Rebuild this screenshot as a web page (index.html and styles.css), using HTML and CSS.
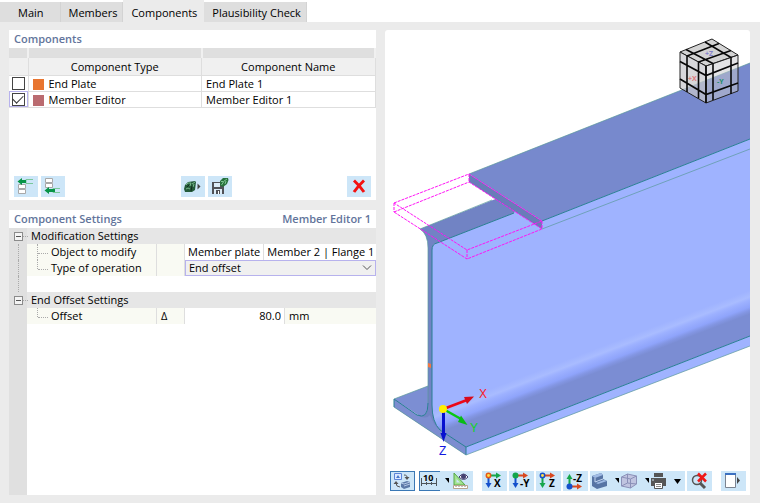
FILE: index.html
```html
<!DOCTYPE html>
<html lang="en">
<head>
<meta charset="utf-8">
<title>Steel Joint – Components</title>
<link rel="stylesheet" href="styles.css">
</head>
<body>
<nav class="tabs" role="tablist">
  <button class="tab" role="tab">Main</button>
  <button class="tab" role="tab">Members</button>
  <button class="tab active" role="tab" aria-selected="true">Components</button>
  <button class="tab" role="tab">Plausibility Check</button>
</nav>
<main class="workspace">
  <div class="side">
    <section class="panel components">
      <h2>Components</h2>
      <table class="list">
        <colgroup><col class="c-check"><col><col></colgroup>
        <thead>
          <tr class="strip"><td></td><td></td><td></td></tr>
          <tr><th></th><th scope="col">Component Type</th><th scope="col">Component Name</th></tr>
        </thead>
        <tbody>
          <tr><td class="check"><input type="checkbox" aria-label="End Plate"></td><td><i class="swatch orange"></i>End Plate</td><td>End Plate 1</td></tr>
          <tr><td class="check focus"><input type="checkbox" checked aria-label="Member Editor"></td><td><i class="swatch rose"></i>Member Editor</td><td>Member Editor 1</td></tr>
        </tbody>
      </table>
      <div class="actions">
        <button aria-label="Insert before"><svg viewBox="0 0 24 21"><g fill="#fff" stroke="#a8a8a8"><path d="M4.500 8.500h7v4h-7zM4.500 13.500h7v4h-7z"/></g><path d="M19 3.500h-7v4h7" fill="none" stroke="#7ac79b"/><path d="M3.500 5.500L8 2v2h4v3H8v2z" fill="#079447"/></svg></button>
        <button aria-label="Insert after"><svg viewBox="0 0 24 21"><g fill="#fff" stroke="#a8a8a8"><path d="M4.500 2.500h7v4h-7zM4.500 7.500h7v4h-7z"/></g><path d="M19 12.500h-7v4h7" fill="none" stroke="#7ac79b"/><path d="M3.500 14.500L8 11v2h6v3H8v2z" fill="#079447"/></svg></button>
        <button class="library" aria-label="Load component"><svg viewBox="0 0 24 21"><path d="M4 9l3-3 7-1 1 1-1 8-3 2-7 0-1-3z" fill="#245b3a"/><path d="M5 9l2-2h3l-1 3M5 13l2-1 2 1M11 8l3-2M12 11l1-3" stroke="#79b98c" fill="none"/><path d="M8 9l-2 2M11 10l-1 5" stroke="#122a1c"/><path d="M16.500 7.500v6l3-3z" fill="#444"/></svg></button>
        <button aria-label="Save component"><svg viewBox="0 0 24 21"><path d="M4 6h10l2 2v10H4z" fill="#505257"/><path d="M6 7h6v4H6zM6 13h8v5H6z" fill="#dcecf7"/><path d="M8 14h4v4H8z" fill="#505257"/><path d="M10.500 15v3" stroke="#fff"/><path d="M12 5l3-3 5-0 .5 2-1.500 4-4 3-3-1.500z" fill="#27713d"/><path d="M13 5.500l2.500 0 3.500-2.500M13.500 9l2-3M17 8l1-3" stroke="#7cc592" fill="none"/></svg></button>
        <button class="delete" aria-label="Delete component"><svg viewBox="0 0 24 21"><path d="M7 4.500Q12 9 17 16M17 4.500Q12 9 7 16" fill="none" stroke="#f31212" stroke-width="3"/></svg></button>
      </div>
    </section>
    <section class="panel settings">
      <header><h2>Component Settings</h2><h2>Member Editor 1</h2></header>
      <div class="tree">
        <div class="group"><button class="fold" aria-label="Collapse modification settings"></button><i class="stub"></i><h3>Modification Settings</h3></div>
        <div class="prop"><span class="gutter line"></span><span class="name"><i class="branch"></i>Object to modify</span><span class="symbol"></span><span class="value pair"><span>Member plate</span><span>Member 2 | Flange 1</span></span></div>
        <div class="prop"><span class="gutter line"></span><label class="name" for="operation"><i class="branch end"></i>Type of operation</label><span class="symbol"></span><span class="value choose"><select id="operation"><option>End offset</option></select><svg viewBox="0 0 10 6"><path d="M1 .5l4 4 4-4" fill="none" stroke="#555"/></svg></span></div>
        <div class="prop"><span class="gutter line"></span></div>
        <div class="group"><button class="fold" aria-label="Collapse end offset settings"></button><i class="stub"></i><h3>End Offset Settings</h3></div>
        <div class="prop"><span class="gutter"></span><label class="name" for="offset"><i class="branch end"></i>Offset</label><span class="symbol">Δ</span><span class="value measure"><input id="offset" type="text" value="80.0"><span class="unit">mm</span></span></div>
        <div class="rest"><span class="gutter"></span></div>
      </div>
    </section>
  </div>
  <section class="panel view">
    <svg class="scene" viewBox="385 30 365 436" preserveAspectRatio="xMidYMid slice" role="img" aria-label="Model view">
      <defs>
        <linearGradient id="fillet" gradientUnits="userSpaceOnUse" x1="750" y1="290" x2="758" y2="311">
          <stop offset="0" stop-color="#9fb3ff"/><stop offset=".28" stop-color="#a9bcff"/><stop offset=".42" stop-color="#9db1ff"/><stop offset=".7" stop-color="#8fa4fb"/><stop offset=".85" stop-color="#8396e3"/><stop offset="1" stop-color="#7b8dd3"/>
        </linearGradient>
      </defs>
      <!-- lower flange and web -->
      <path d="M432 250Q432 244 437 243L514 213V208L542 226 750 145V336L466 447 440 430Q432 422 432 405z" fill="url(#fillet)"/>
      <path d="M466 447L750 336V346L466 455z" fill="#9fb3ff"/>
      <path d="M394 399L428 386V404Q427 421 418 415z" fill="#7c8ed3"/>
      <!-- cut face -->
      <path d="M420 229L498 198 516 209 514 213 437 243Q432 244 432 250V405Q432 422 440 430L466 447V455L394 407V399L417 415Q428 420 428 403V248Q428 234 420 229z" fill="#7183c4"/>
      <path d="M394 399L417 415Q426 420 430 415 434 426 440 430L466 447V455L394 407z" fill="#7c8dd0"/>
      <!-- upper flange -->
      <path d="M469 174L750 63V139L542 221z" fill="#7789cd"/>
      <path d="M542 221L750 139V149L542 229z" fill="#9fb3ff"/>
      <path d="M469 174V182L542 229V221z" fill="#697cb9"/>
      <g fill="none" stroke="#287f93">
        <path d="M394 399V407M466 455V447L440 430Q432 422 432 405V250Q432 244 437 243L514 213M394 399L417 415Q428 420 428 403M466 447L750 336M542 221L750 139"/>
        <path d="M428 403V248Q428 234 420 229M394 399L428 386M394 407L466 455 750 346M542 229L750 149M420 229L492 200M469 174L750 63" stroke="#5a9a9b" stroke-width=".7"/>
      </g>
      <g class="ghost"><path d="M394 203L469 174 542 221 467 250zM394 212L469 182 542 229 467 259zM394 203V212M469 174V182M542 221V229M467 250V259"/></g>
      <path d="M428 363l3 1v4l-3-1z" fill="#f47742"/>
      <path d="M443.500 410V434" stroke="#0710cf" stroke-width="3"/><path d="M440.500 433h6l-3 9z" fill="#0710cf"/>
      <path d="M445 410L461 419" stroke="#09c812" stroke-width="2.500"/><path d="M461 415.500L467.500 425 458 422z" fill="#08bb14"/>
      <path d="M446 408L467 400" stroke="#ec0818" stroke-width="2.500"/><path d="M464 397L474 396.500 467 404z" fill="#d80a1b"/>
      <circle cx="443" cy="409" r="4" fill="#fff000"/>
      <g class="axis"><text x="479" y="398" fill="#fa1a28">X</text><text x="470" y="432" fill="#0ed51b">Y</text><text x="439" y="455" fill="#1118df">Z</text></g>
      <g class="cube">
        <path d="M680 52L712 39 738 55 706 66z" fill="#d4d4d4"/><path d="M680 52L706 66V103L680 88z" fill="#c8c8cc" fill-opacity=".72"/><path d="M706 66L738 55V91L706 103z" fill="#c8c8cc" fill-opacity=".5"/>
        <path class="bars" d="M686 49.500L713 63.500V100M705 42L731 57.500V94M687 92V56L719 43.500M698.500 98.500V62L731 50.500M680 61.500L706 75.500 738 63M680 79L706 94.500 738 83M706 66V103"/>
        <text x="705" y="56" fill="#8581ca">+Z</text><text x="688" y="81" fill="#dc7a7a">+X</text><text x="717" y="84" fill="#208b69">-Y</text>
      </g>
    </svg>
    <div class="toolbar" role="toolbar" aria-label="View">
      <button class="on" aria-label="Switch view"><svg viewBox="0 0 25 20"><path d="M4.500 2.500h7v6h-7z" fill="#dbe9ff" stroke="#5c84d8"/><path d="M6 7l2-3 2 3z" fill="#4877ca"/><path d="M11 12l6-2 3 1v5l-6 2-3-2z" fill="#5d7aa8"/><path d="M11 12l3 1 6-2M14 15l6-2" fill="none" stroke="#b3c7e4"/><path d="M14 4q4 0 3 4M10 16q-4 0-4-4" fill="none" stroke="#555"/><path d="M14.500 6h5L17 9zM3.500 13h5L6 10z" fill="#555"/></svg></button>
      <span class="cluster">
        <button class="w21 on-part" aria-label="Dimensions"><svg viewBox="0 0 21 20"><text class="small" x="4" y="10">10</text><path d="M2.500 7v8M17.500 7v8M3 12.500h14M7.500 11v3M12.500 11v3" stroke="#4d555b" fill="none"/></svg></button>
        <button class="w33" aria-label="Measure"><svg viewBox="0 0 33 20"><path d="M5 7h4v5z"/><path d="M14 2l11 12H14z" fill="#a2e28e" stroke="#56a849"/><path d="M16.500 8v3.500h3.500z" fill="#cde6f8"/><path d="M13.500 14.500h14v3h-14z" fill="#fff" stroke="#b9a38c"/><path d="M16 15v1M19 15v1M22 15v1M25 15v1" stroke="#888"/><path d="M19 6q4.500-6 9 0-4.500 5-9 0" fill="#fff" stroke="#454272"/><circle cx="23.500" cy="5.500" r="2.500" fill="#454272"/></svg></button>
      </span>
      <span class="cluster axes">
        <button aria-label="View along X"><svg viewBox="0 0 25 20"><path d="M6.500 6v7" stroke="#1450cc" stroke-width="2"/><path d="M3.500 12h6l-3 5z" fill="#1450cc"/><path d="M8 4.500h7" stroke="#16a64b" stroke-width="2"/><path d="M14 1.500l5 3-5 3z" fill="#16a64b"/><circle cx="6.500" cy="4.500" r="2.200" fill="#ffe04c" stroke="#e45816" stroke-width="1.500"/><text x="12" y="16">X</text></svg></button>
        <button aria-label="View against Y"><svg viewBox="0 0 25 20"><path d="M6.500 6v7" stroke="#1450cc" stroke-width="2"/><path d="M3.500 12h6l-3 5z" fill="#1450cc"/><path d="M8 4.500h7" stroke="#d84820" stroke-width="2"/><path d="M14 1.500l5 3-5 3z" fill="#d84820"/><circle cx="6.500" cy="4.500" r="3" fill="#12a64b"/><text x="11" y="16">-Y</text></svg></button>
        <button aria-label="View along Z"><svg viewBox="0 0 25 20"><path d="M6.500 6v7" stroke="#16a64b" stroke-width="2"/><path d="M3.500 12h6l-3 5z" fill="#16a64b"/><path d="M8 4.500h7" stroke="#d84820" stroke-width="2"/><path d="M14 1.500l5 3-5 3z" fill="#d84820"/><circle cx="6.500" cy="4.500" r="2.200" fill="#ffe04c" stroke="#1450cc" stroke-width="1.500"/><text x="13" y="16">Z</text></svg></button>
        <button aria-label="View against Z"><svg viewBox="0 0 25 20"><path d="M6.500 6v9" stroke="#16a64b" stroke-width="2"/><path d="M3.500 8h6l-3-5z" fill="#16a64b"/><path d="M8 15.500h7" stroke="#d84820" stroke-width="2"/><path d="M14 12.500l5 3-5 3z" fill="#d84820"/><circle cx="6.500" cy="15.500" r="3" fill="#1450cc"/><text x="10" y="11">-Z</text></svg></button>
      </span>
      <span class="cluster">
        <button class="w30" aria-label="Solid display"><svg viewBox="0 0 30 20"><path d="M2 5l9-3 2 2v4l4 2v5l-10 3-5-3z" fill="#5674a4"/><path d="M2 5l9-3 2 2-8 3zM6 12l8-3 3 1-9 3z" fill="#9fbbe4"/><path d="M5 7v4l8-3" stroke="#c4d7f2" fill="none"/><path d="M25 7h4v5z"/></svg></button>
        <button class="w30" aria-label="Wireframe display"><svg viewBox="0 0 30 20"><path d="M1.500 6l6-3 9 2v8l-6 4-9-2z" fill="#c0c4e0"/><path d="M1.500 6l9 2 6-3M10.500 8v9M7.500 3v9l-6 3M7.500 12l9 1M1.500 6l6-3 9 2v8l-6 4-9-2z" fill="none" stroke="#8b90b8"/><path d="M25 7h4v5z"/></svg></button>
        <button class="w35" aria-label="Print"><svg viewBox="0 0 35 20"><path d="M4 2h9v4H4z" fill="#555"/><path d="M1 7h15v8H1z" fill="#555"/><path d="M4.500 11.500h8v6h-8z" fill="#fff" stroke="#555"/><path d="M6 13.500h5M6 15.500h5" stroke="#888"/><path d="M2 9h2" stroke="#d6e5ef"/><path d="M24 8h7l-3.500 5z"/></svg></button>
      </span>
      <button class="reset" aria-label="Reset zoom"><svg viewBox="0 0 25 20"><circle cx="10" cy="9" r="4.500" fill="none" stroke="#555" stroke-width="1.500"/><path d="M13 12l5 5" stroke="#555" stroke-width="3"/><path d="M11 2.500l8 8M19 2.500l-8 8" stroke="#f01818" stroke-width="2.500"/></svg></button>
      <button class="last" aria-label="Show panel"><svg viewBox="0 0 25 20"><path d="M4.500 2.500h10v14h-10z" fill="#fff" stroke="#7b8390"/><path d="M4 2h11v2H4z" fill="#3b70c1"/><path d="M16 6v7l3-3.500z" fill="#444"/></svg></button>
    </div>
  </section>
</main>
</body>
</html>
```
FILE: styles.css
```css
* { box-sizing: border-box; }
html, body { height: 100%; }
body {
  margin: 0;
  display: flex;
  flex-direction: column;
  background: #ebebeb;
  color: #000;
  font: 500 11px/16px "Open Sans", "Noto Sans", sans-serif;
}
button, input, select { font: inherit; color: inherit; margin: 0; padding: 0; border: 0; border-radius: 0; }
h2, h3 { margin: 0; font: inherit; }
svg { display: block; }

.tabs { display: flex; align-items: flex-end; height: 22px; background: #fff; }
.tab { height: 20px; padding: 1px 5px 0 8px; background: #dedede; border-right: 1px solid #d3d3d3; }
.tab:first-child { padding: 1px 16px 0 18px; }
.tab.active { height: 22px; background: #ebebeb; padding: 3px 7px 0 8px; border: 0; }

.workspace {
  flex: 1;
  min-height: 0;
  padding: 8px 10px 8px 9px;
  display: grid;
  grid-template-columns: minmax(0, 367fr) minmax(0, 365fr);
  gap: 9px;
}
.side { display: flex; flex-direction: column; gap: 10px; min-height: 0; }
.panel { background: #fff; }
h2 { color: #62749b; font-weight: 600; line-height: 18px; }

.components { flex: 0 0 170px; display: flex; flex-direction: column; }
.components h2 { padding-left: 5px; }
.list { width: 100%; table-layout: fixed; border-collapse: collapse; }
.c-check { width: 19px; }
.list td, .list th {
  padding: 0 4px;
  height: 16px;
  border-right: 1px solid #dedede;
  border-bottom: 1px solid #dedede;
  font-weight: inherit;
  line-height: 15px;
}
.list .strip td { height: 9px; line-height: 8px; background: #dfdfdf; border-right: 2px solid #f0f0f0; }
.list th { height: 18px; background: #f0f0f0; }
.list .check { padding: 0; }
.focus { outline: 1px solid #b7b2ed; outline-offset: -1px; }
.check input {
  appearance: none;
  display: grid;
  place-items: center;
  width: 13px;
  height: 13px;
  margin: 0 auto;
  border: 1px solid #444;
  background: #fff;
}
.check input:checked::before {
  content: "";
  width: 9px;
  height: 5px;
  margin-bottom: 3px;
  border: solid #333;
  border-width: 0 0 1px 1px;
  transform: rotate(-45deg);
}
.swatch { display: inline-block; width: 11px; height: 11px; margin-right: 5px; vertical-align: -2px; }
.orange { background: #e87530; }
.rose { background: #ba6b70; }

.actions { display: flex; gap: 3px; margin-top: auto; padding: 0 5px 3px; }
.actions button { width: 24px; height: 21px; background: #cde6f8; }
.actions .library { margin-left: auto; }
.actions .delete { margin-left: auto; }

.settings { flex: 1; display: flex; flex-direction: column; min-height: 0; }
.settings header { display: flex; justify-content: space-between; padding: 0 5px; }
.tree { flex: 1; display: flex; flex-direction: column; }
.group { display: flex; align-items: center; height: 16px; padding-left: 5px; background: linear-gradient(90deg, #e0e0e0 18px, #e6e6e6 18px); }
.fold { width: 9px; height: 9px; border: 1px solid #8b8b8b; background: linear-gradient(#555, #555) center / 5px 1px no-repeat #f4f4f4; }
.stub { width: 5px; margin-right: 3px; border-top: 1px dotted #aaa; }
.prop { display: flex; height: 16px; white-space: nowrap; }
.gutter { flex: 0 0 18px; background: #e0e0e0; }
.line::before { content: ""; display: block; height: 100%; margin-left: 9px; border-left: 1px dotted #aaa; }
.name { flex: 0 0 130px; display: flex; padding-left: 10px; background: #f9faf3; border-right: 1px solid #dedede; }
.branch { width: 11px; margin-right: 3px; border-left: 1px dotted #aaa; }
.branch::before { content: ""; display: block; height: 9px; border-bottom: 1px dotted #aaa; }
.branch.end { height: 9px; }
.symbol { flex: 0 0 28px; padding-left: 4px; background: #f9faf3; border-right: 1px solid #dedede; }
.value { flex: 1; min-width: 0; display: flex; }
.rest { flex: 1; display: flex; }
.pair span { padding: 0 3px; }
.pair span + span { border-left: 1px solid #dedede; }
.choose { display: grid; align-items: center; }
.choose > * { grid-area: 1 / 1; }
.choose select { appearance: none; width: 100%; height: 16px; line-height: 14px; padding-left: 3px; background: #f0f0f0; border: 1px solid #b7b2ed; }
.choose svg { width: 10px; height: 6px; justify-self: end; margin-right: 4px; pointer-events: none; }
.measure input { width: 99px; text-align: right; padding-right: 3px; }
.unit { flex: 1; padding-left: 4px; background: #f9faf3; border-left: 1px solid #dedede; }

.view { display: flex; flex-direction: column; min-height: 0; border-radius: 3px 3px 0 0; overflow: hidden; }
.scene { flex: 1; min-height: 0; width: 100%; }
.ghost { fill: none; stroke: #ff14f4; stroke-dasharray: 3 1; }
.axis { font: 12px "Liberation Sans", sans-serif; }
.cube { fill: none; stroke: #222; stroke-width: 1; }
.cube .bars { stroke: #080808; stroke-width: 1.6; }
.cube text { stroke: none; font-size: 7px; font-weight: 700; }

.toolbar { display: flex; justify-content: space-between; height: 29px; padding: 5px 4px 4px 5px; }
.cluster { display: flex; }
.axes { gap: 2px; margin: 0 -2px 0 4px; }
.toolbar button { height: 20px; width: 25px; background: #cde6f8; }
.toolbar svg { width: 100%; height: 20px; }
.toolbar .w21 { width: 21px; }
.toolbar .w33 { width: 33px; }
.toolbar .w30 { width: 30px; }
.toolbar .w35 { width: 35px; }
.toolbar .reset { margin-left: -3px; }
.toolbar .last { margin-left: 5px; }
.on { box-shadow: inset 0 0 0 1px #3a78b5; }
.on-part { box-shadow: inset 1px 0 #3a78b5, inset 0 1px #3a78b5, inset 0 -1px #3a78b5; }
.toolbar text { font: 700 10px "Open Sans", sans-serif; }
.toolbar .small { font-size: 9px; }
```
